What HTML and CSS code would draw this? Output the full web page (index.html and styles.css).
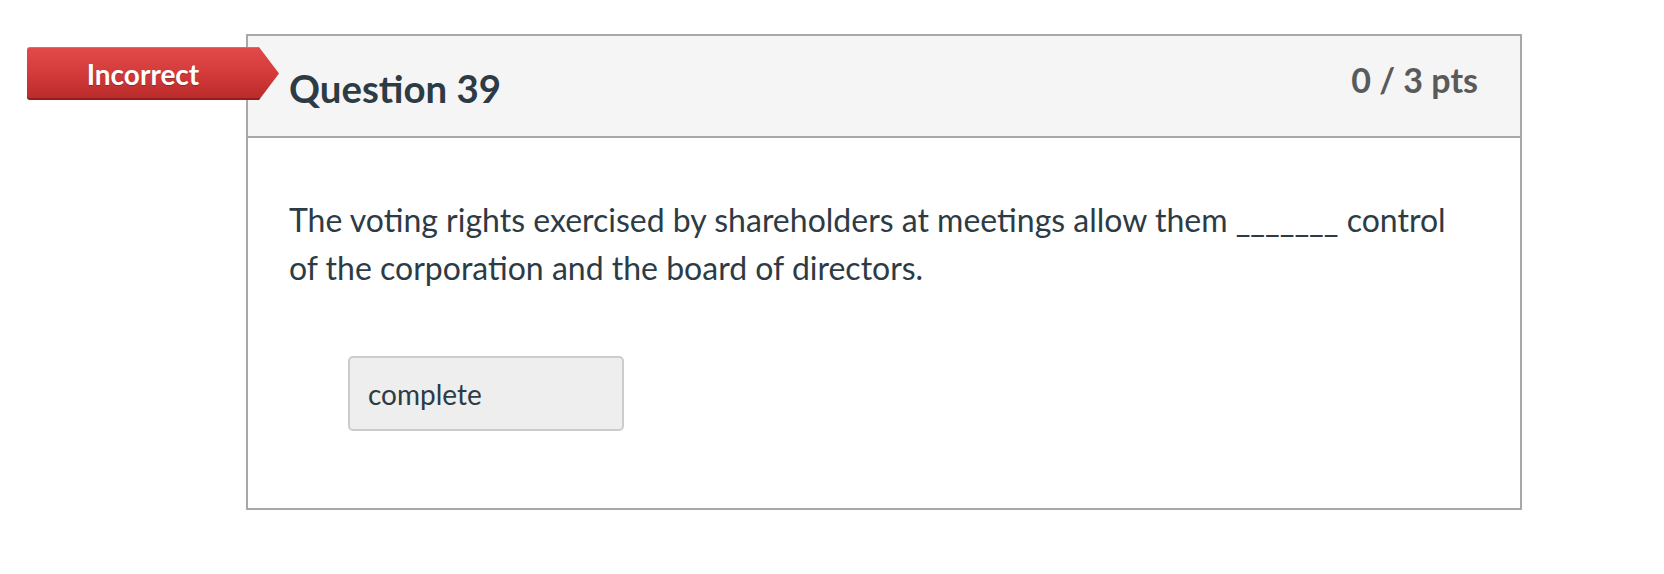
FILE: index.html
```html
<!DOCTYPE html>
<html lang="en">
<head>
<meta charset="utf-8">
<title>Question 39</title>
<link rel="stylesheet" href="styles.css">
</head>
<body>
<div class="page">
  <div class="question">
    <div class="badge">Incorrect</div>
    <div class="question-header">
      <h2 class="question-title">Question 39</h2>
      <div class="points">0 / 3 pts</div>
    </div>
    <div class="question-body">
      <p class="question-text">The voting rights exercised by shareholders at meetings allow them _______ control of the corporation and the board of directors.</p>
      <div class="answer">complete</div>
    </div>
  </div>
</div>
</body>
</html>
```

FILE: styles.css
```css
html, body {
  margin: 0;
  padding: 0;
  background: #ffffff;
}

body {
  font-family: "Lato", "Open Sans", "Liberation Sans", sans-serif;
  color: #2d3b45;
}

.page {
  padding: 34px 0 0 246px;
}

.question {
  position: relative;
  box-sizing: border-box;
  width: 1276px;
  border: 2px solid #a8a8a8;
  background: #ffffff;
}

.badge {
  position: absolute;
  left: -221px;
  top: 11px;
  width: 252px;
  height: 53px;
  box-sizing: border-box;
  padding-right: 20px;
  display: flex;
  align-items: center;
  justify-content: center;
  font-size: 28px;
  font-weight: 700;
  color: #ffffff;
  text-shadow: 0 1px 1px rgba(0, 0, 0, 0.25);
  background: linear-gradient(to bottom, #e24b4b 0%, #d43a3a 50%, #b82a2a 100%);
  border-radius: 3px 0 0 3px;
  box-shadow: inset 0 -2px 0 rgba(90, 0, 0, 0.35), inset 0 1px 0 rgba(255, 255, 255, 0.15);
  clip-path: polygon(0 0, 232px 0, 100% 50%, 232px 100%, 0 100%);
  z-index: 2;
}

.question-header {
  display: flex;
  justify-content: space-between;
  align-items: flex-start;
  box-sizing: border-box;
  height: 102px;
  padding: 23px 42px 0 41px;
  background: #f5f5f5;
  border-bottom: 2px solid #a8a8a8;
}

.question-title {
  margin: 6px 0 0 0;
  font-size: 38.4px;
  line-height: 1.2;
  font-weight: 700;
  color: #2d3b45;
}

.points {
  margin-top: 1px;
  font-size: 34px;
  line-height: 1.2;
  font-weight: 700;
  color: #5a5a5a;
}

.question-body {
  padding: 57.5px 42px 77px 41px;
}

.question-text {
  margin: 0;
  font-size: 32px;
  line-height: 48px;
  color: #2d3b45;
}

.answer {
  margin: 64.5px 0 0 59px;
  box-sizing: border-box;
  width: 276px;
  height: 75px;
  padding-left: 18px;
  display: flex;
  align-items: center;
  font-size: 28px;
  color: #2d3b45;
  background: #eeeeee;
  border: 2px solid #cccccc;
  border-radius: 5px;
}
```
